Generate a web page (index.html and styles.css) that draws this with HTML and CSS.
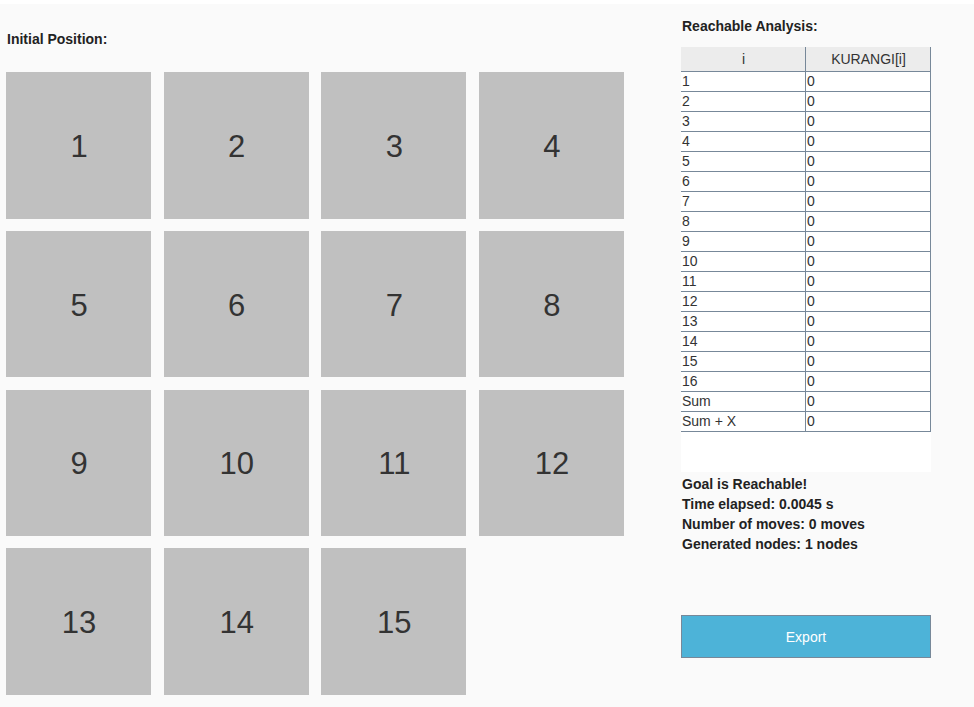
FILE: index.html
```html
<!DOCTYPE html>
<html>
<head>
<meta charset="utf-8">
<link rel="stylesheet" href="styles.css">
</head>
<body>
<div class="page">
  <div class="left">
    <div class="title">Initial Position:</div>
    <div class="board">
      <div class="tile">1</div>
      <div class="tile">2</div>
      <div class="tile">3</div>
      <div class="tile">4</div>
      <div class="tile">5</div>
      <div class="tile">6</div>
      <div class="tile">7</div>
      <div class="tile">8</div>
      <div class="tile">9</div>
      <div class="tile">10</div>
      <div class="tile">11</div>
      <div class="tile">12</div>
      <div class="tile">13</div>
      <div class="tile">14</div>
      <div class="tile">15</div>
    </div>
  </div>
  <div class="right">
    <div class="rtitle">Reachable Analysis:</div>
    <table class="kt">
      <thead><tr><th>i</th><th>KURANGI[i]</th></tr></thead>
      <tbody>
        <tr><td>1</td><td>0</td></tr>
        <tr><td>2</td><td>0</td></tr>
        <tr><td>3</td><td>0</td></tr>
        <tr><td>4</td><td>0</td></tr>
        <tr><td>5</td><td>0</td></tr>
        <tr><td>6</td><td>0</td></tr>
        <tr><td>7</td><td>0</td></tr>
        <tr><td>8</td><td>0</td></tr>
        <tr><td>9</td><td>0</td></tr>
        <tr><td>10</td><td>0</td></tr>
        <tr><td>11</td><td>0</td></tr>
        <tr><td>12</td><td>0</td></tr>
        <tr><td>13</td><td>0</td></tr>
        <tr><td>14</td><td>0</td></tr>
        <tr><td>15</td><td>0</td></tr>
        <tr><td>16</td><td>0</td></tr>
        <tr><td>Sum</td><td>0</td></tr>
        <tr><td>Sum + X</td><td>0</td></tr>
      </tbody>
    </table>
    <div class="blank"></div>
    <div class="info">
      <div>Goal is Reachable!</div>
      <div>Time elapsed: 0.0045 s</div>
      <div>Number of moves: 0 moves</div>
      <div>Generated nodes: 1 nodes</div>
    </div>
    <button class="export">Export</button>
  </div>
</div>
</body>
</html>
```
FILE: styles.css
```css
html, body {
  margin: 0;
  padding: 0;
  background: #ffffff;
}
body {
  font-family: "Liberation Sans", Arial, sans-serif;
  color: #333333;
  font-size: 14px;
}
.page {
  margin-top: 4px;
  height: 703px;
  background: #fafafa;
  display: flex;
  overflow: hidden;
}
.left {
  padding-left: 6px;
  width: 618px;
}
.title {
  margin-top: 27px;
  padding-left: 1px;
  font-weight: bold;
  line-height: 16px;
  height: 16px;
  color: #222222;
}
.board {
  margin-top: 25px;
  display: grid;
  grid-template-columns: repeat(4, 145px);
  grid-auto-rows: 146.5px;
  column-gap: 12.67px;
  row-gap: 12.33px;
}
.tile {
  background: #c0c0c0;
  display: flex;
  align-items: center;
  justify-content: center;
  padding-top: 3px;
  padding-left: 1px;
  box-sizing: border-box;
  font-size: 31px;
  color: #333333;
}
.right {
  margin-left: 57px;
  width: 250px;
}
.rtitle {
  margin-top: 14px;
  padding-left: 1px;
  font-weight: bold;
  line-height: 16px;
  height: 16px;
  color: #222222;
}
.kt {
  margin-top: 13px;
  border-collapse: separate;
  border-spacing: 0;
  width: 250px;
  table-layout: fixed;
}
.kt th, .kt td {
  border-right: 1px solid #778899;
  border-bottom: 1px solid #778899;
  padding: 0 0 0 1px;
  width: 123px;
  text-align: left;
  color: #333333;
}
.kt th {
  background: #ececec;
  font-weight: normal;
  text-align: center;
  height: 24px;
  line-height: 24px;
}
.kt td {
  background: #ffffff;
  height: 19px;
  line-height: 19px;
}
.blank {
  height: 40px;
  background: #ffffff;
}
.info {
  margin-top: 2px;
  padding-left: 1px;
  font-weight: bold;
  line-height: 20px;
  color: #222222;
}
.export {
  display: block;
  margin-top: 61px;
  width: 250px;
  height: 43px;
  background: #4db3d8;
  border: 1px solid #778899;
  color: #ffffff;
  font-family: "Liberation Sans", Arial, sans-serif;
  font-size: 14px;
  padding: 0;
}
```
